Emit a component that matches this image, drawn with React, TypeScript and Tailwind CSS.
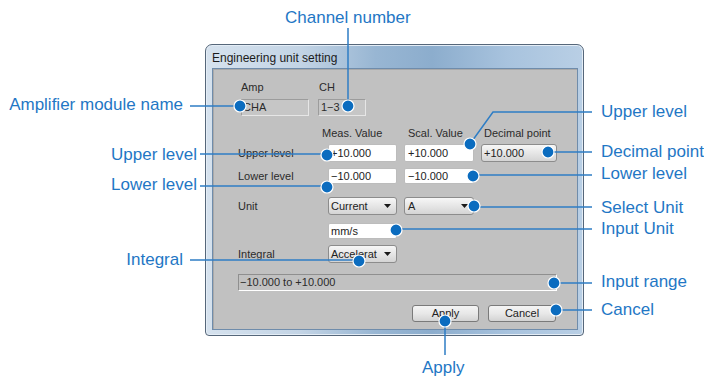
import React from "react";

const FONT = { fontFamily: '"Liberation Sans", Arial, sans-serif' };

function Tri() {
  return (
    <svg width="7" height="4" viewBox="0 0 7 4" className="shrink-0">
      <path d="M0 0H7L3.5 4Z" fill="#1a1a1a" />
    </svg>
  );
}

function Drop({ cls, text, tri = true }: { cls: string; text: string; tri?: boolean }) {
  return (
    <div
      className={
        "flex items-center justify-between rounded-[3px] border border-[#8c8c8c] bg-[linear-gradient(180deg,#f7f7f7_0%,#e6e6e6_50%,#d4d4d4_100%)] pl-[2px] pr-[5px] text-[11px] leading-[13px] text-[#222] overflow-hidden whitespace-nowrap " +
        cls
      }
    >
      <span>{text}</span>
      {tri && <Tri />}
    </div>
  );
}

function Field({ cls, text }: { cls: string; text: string }) {
  return (
    <div
      className={
        "flex items-center rounded-[2px] border border-[#bcbcbc] bg-white pl-[2px] text-[11px] leading-[13px] text-[#222] " +
        cls
      }
    >
      {text}
    </div>
  );
}

function Btn({ cls, text }: { cls: string; text: string }) {
  return (
    <div
      className={
        "flex items-center justify-center rounded-[3px] border border-[#7a7a7a] bg-[linear-gradient(180deg,#f4f4f4_0%,#e8e8e8_50%,#d3d3d3_100%)] text-[11px] leading-[13px] text-[#222] " +
        cls
      }
    >
      {text}
    </div>
  );
}

function Label({ cls, text }: { cls: string; text: string }) {
  return (
    <div className={"absolute whitespace-nowrap text-[17px] leading-[19px] text-[#1f77c5] " + cls}>
      {text}
    </div>
  );
}

export default function App() {
  const lines = [
    "M348 28V106",
    "M190 106H240",
    "M200 154H327",
    "M200 186H327",
    "M190 260H359",
    "M592 112H493L470 144",
    "M548 152H592",
    "M473 175H592",
    "M474 207H592",
    "M396 229H592",
    "M554 283H592",
    "M556 310H592",
    "M445 321V355",
  ];
  const dots: [number, number][] = [
    [348, 106],
    [240, 106],
    [327, 155],
    [327, 187],
    [359, 261],
    [470, 144],
    [548, 152],
    [473, 176],
    [474, 206],
    [396, 230],
    [554, 283],
    [556, 310],
    [445, 321],
  ];

  return (
    <div className="relative w-[704px] h-[381px] overflow-hidden bg-white pt-[44px]" style={FONT}>
      {/* Dialog window */}
      <div className="ml-[205px] flex h-[292px] w-[379px] flex-col rounded-t-[7px] rounded-b-[4px] border border-[#56677a] bg-[linear-gradient(90deg,#d6e2ee_0%,#c3d4e5_25%,#98b6d3_45%,#8cadcd_60%,#a8c3de_80%,#b9cfe5_100%)] shadow-[inset_0_0_0_1px_#e4edf6]">
        <div className="flex h-[23px] items-center pl-[6px] pt-[2px] text-[12px] leading-[14px] text-[#1b1b1b]">
          Engineering unit setting
        </div>
        <div className="ml-[6px] h-[262px] w-[366px] border border-[#6f8cab] bg-[#c1c1c1]">
          <div className="h-full w-full border-t border-l border-[#a9a9a9] text-[11px] leading-[13px] text-[#2b2b2b]">
            {/* Amp / CH labels */}
            <div className="flex pt-[11px]">
              <div className="ml-[27px] w-[78px]">Amp</div>
              <div>CH</div>
            </div>
            {/* Amp / CH read-only boxes */}
            <div className="mt-[5px] flex">
              <div className="ml-[27px] flex h-[17px] w-[68px] items-center border border-[#9c9c9c] border-r-[#e6e6e6] border-b-[#e6e6e6] bg-[#c6c6c6] pl-[1px]">
                CHA
              </div>
              <div className="ml-[9px] flex h-[17px] w-[48px] items-center border border-[#9c9c9c] border-r-[#e6e6e6] border-b-[#e6e6e6] bg-[#c6c6c6] pl-[2px]">
                1−3
              </div>
            </div>
            {/* Column headers */}
            <div className="mt-[11px] flex">
              <div className="ml-[108px] w-[86px]">Meas. Value</div>
              <div className="w-[76px]">Scal. Value</div>
              <div>Decimal point</div>
            </div>
            {/* Upper level */}
            <div className="mt-[4px] flex items-center">
              <div className="ml-[24px] w-[90px]">Upper level</div>
              <Field cls="h-[18px] w-[69px]" text="+10.000" />
              <Field cls="ml-[7px] h-[18px] w-[70px] pl-[3px]" text="+10.000" />
              <Drop cls="ml-[7px] h-[18px] w-[76px]" text="+10.000" tri={false} />
            </div>
            {/* Lower level */}
            <div className="mt-[6px] flex items-center">
              <div className="ml-[24px] w-[90px]">Lower level</div>
              <Field cls="h-[16px] w-[69px]" text="−10.000" />
              <Field cls="ml-[7px] h-[16px] w-[70px] pl-[3px]" text="−10.000" />
            </div>
            {/* Unit */}
            <div className="mt-[13px] flex items-center">
              <div className="ml-[24px] w-[90px]">Unit</div>
              <Drop cls="h-[18px] w-[69px]" text="Current" />
              <Drop cls="ml-[7px] h-[18px] w-[70px] pl-[3px]" text="A" />
            </div>
            {/* Input unit */}
            <div className="mt-[8px] flex items-center">
              <Field cls="ml-[114px] h-[16px] w-[69px]" text="mm/s" />
            </div>
            {/* Integral */}
            <div className="mt-[6px] flex items-center">
              <div className="ml-[24px] w-[90px]">Integral</div>
              <Drop cls="h-[18px] w-[69px]" text="Accelerat" />
            </div>
            {/* Input range */}
            <div className="mt-[11px] flex">
              <div className="ml-[24px] flex h-[17px] w-[319px] items-center border border-[#8f8f8f] border-r-white border-b-white bg-[#c1c1c1] pl-[1px]">
                −10.000 to +10.000
              </div>
            </div>
            {/* Buttons */}
            <div className="mt-[14px] flex">
              <Btn cls="ml-[198px] h-[17px] w-[67px]" text="Apply" />
              <Btn cls="ml-[9px] h-[17px] w-[68px]" text="Cancel" />
            </div>
          </div>
        </div>
      </div>

      {/* Callout lines and markers */}
      <svg className="pointer-events-none absolute left-0 top-0" width="704" height="381" viewBox="0 0 704 381">
        {lines.map((d, i) => (
          <path key={i} d={d} fill="none" stroke="#2e7dc5" strokeWidth="1.5" />
        ))}
        {dots.map(([x, y], i) => (
          <circle key={i} cx={x} cy={y} r="6" fill="#0b6cbf" stroke="#ffffff" strokeWidth="1.2" />
        ))}
      </svg>

      {/* Callout labels */}
      <Label cls="left-[285px] top-[8px]" text="Channel number" />
      <Label cls="right-[521px] top-[95px]" text="Amplifier module name" />
      <Label cls="right-[507px] top-[145px]" text="Upper level" />
      <Label cls="right-[507px] top-[175px]" text="Lower level" />
      <Label cls="right-[521px] top-[250px]" text="Integral" />
      <Label cls="left-[601px] top-[102px]" text="Upper level" />
      <Label cls="left-[601px] top-[142px]" text="Decimal point" />
      <Label cls="left-[601px] top-[164px]" text="Lower level" />
      <Label cls="left-[601px] top-[198px]" text="Select Unit" />
      <Label cls="left-[601px] top-[219px]" text="Input Unit" />
      <Label cls="left-[601px] top-[272px]" text="Input range" />
      <Label cls="left-[601px] top-[300px]" text="Cancel" />
      <Label cls="left-[422px] top-[358px]" text="Apply" />
    </div>
  );
}
